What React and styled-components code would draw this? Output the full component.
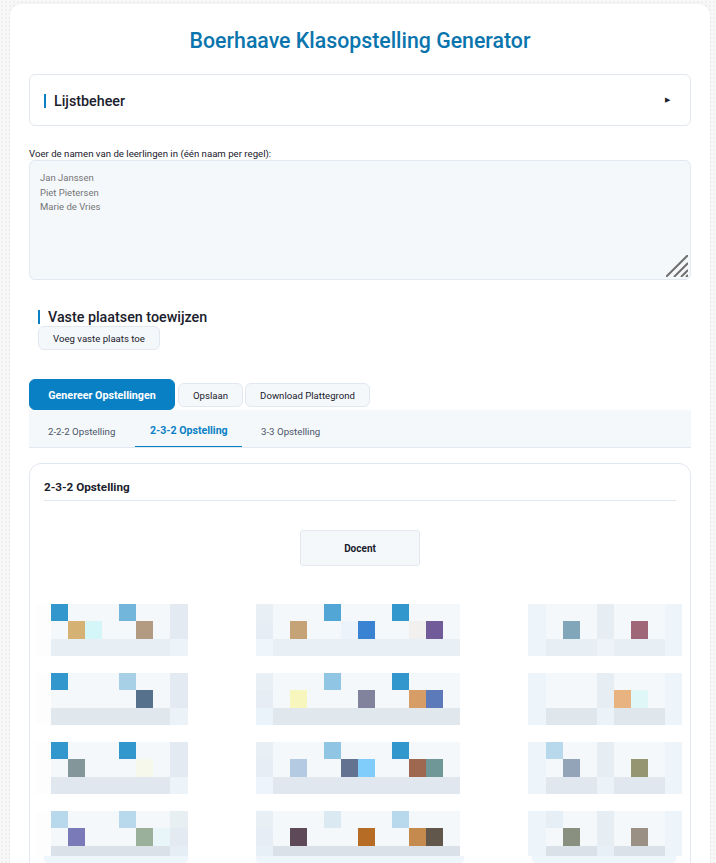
import React from 'react';
import styled, { createGlobalStyle } from 'styled-components';

const Global = createGlobalStyle`
  html, body {
    margin: 0;
    height: 863px;
    overflow: hidden;
  }
  body {
    background-color: #f8f8f8;
    background-image: radial-gradient(#f0f0f0 1px, transparent 1px);
    background-size: 4px 4px;
    font-family: Roboto, "Noto Sans", sans-serif;
    color: #1a202c;
  }
`

const Container = styled.div`
  box-sizing: border-box;
  width: 700px;
  margin: 4px 0 0 10px;
  padding: 20px 19px;
  height: 900px;
  background: #fff;
  border-radius: 12px;
  box-shadow: 0 0 4px rgba(0, 0, 0, 0.04);
`

const Title = styled.h1`
  margin: 0;
  height: 50px;
  line-height: 33px;
  text-align: center;
  font-size: 21.3px;
  font-weight: 500;
  color: #0a75ad;
`

const Panel = styled.div`
  box-sizing: border-box;
  height: 52px;
  padding: 0 20px 0 14px;
  display: flex;
  align-items: center;
  justify-content: space-between;
  border: 1px solid #e2e8f0;
  border-radius: 6px;
`

const SectionTitle = styled.h3`
  margin: 0;
  padding-left: 8px;
  border-left: 2px solid #0a80c4;
  font-size: 14.3px;
  line-height: 14px;
  font-weight: 500;
  position: relative;
  top: 1px;
`

const Arrow = styled.span`
  font-size: 7px;
  line-height: 8px;
  margin-bottom: 1px;
  color: #1a202c;
`

const Label = styled.label`
  display: block;
  margin-top: 21px;
  height: 13px;
  font-size: 9.65px;
  line-height: 13px;
`

const AreaWrap = styled.div`
  position: relative;
  height: 120px;
`

const Area = styled.textarea`
  box-sizing: border-box;
  display: block;
  width: 100%;
  height: 100%;
  padding: 10px;
  resize: none;
  background: #f4f8fb;
  border: 1px solid #e2e8f0;
  border-radius: 6px;
  font-family: inherit;
  font-size: 9.5px;
  line-height: 14.5px;
  &::placeholder {
    color: #757575;
  }
`

const Grip = styled.svg`
  position: absolute;
  right: 3px;
  bottom: 3px;
`

const Fixed = styled.section`
  margin: 29px 0 0 9px;
`

const Button = styled.button`
  box-sizing: border-box;
  width: ${p => p.$w}px;
  height: 24px;
  padding: 1px 0 0;
  background: #f4f8fb;
  border: 1px solid #e2e8f0;
  border-radius: 6px;
  font-family: inherit;
  font-size: 9.6px;
  font-weight: 400;
  color: #1a202c;
`

const AddButton = styled(Button)`
  display: block;
  margin-top: 3px;
`

const Actions = styled.div`
  margin-top: 29px;
  display: flex;
  align-items: center;
  gap: 2px;
`

const Primary = styled(Button)`
  height: 31px;
  margin-right: 1px;
  background: #0a80c4;
  border-color: #0a80c4;
  color: #fff;
  font-size: 10.7px;
  font-weight: 700;
`

const Tabs = styled.div`
  box-sizing: border-box;
  height: 38px;
  display: flex;
  background: #f4f8fb;
  border-bottom: 1px solid #e2e8f0;
`

const Tab = styled.div`
  box-sizing: border-box;
  width: ${p => p.$w}px;
  height: 37px;
  padding: ${p => (p.$active ? '5px 0 0 15px' : '5px 0 0 19px')};
  display: flex;
  align-items: center;
  font-size: ${p => (p.$active ? '10.6px' : '9.7px')};
  font-weight: ${p => (p.$active ? 700 : 400)};
  color: ${p => (p.$active ? '#0a80c4' : '#4a5568')};
  border-bottom: ${p => (p.$active ? '1px solid #0a80c4' : 'none')};
`

const Card = styled.div`
  box-sizing: border-box;
  margin-top: 15px;
  height: 500px;
  padding: 14px 14px 0;
  border: 1px solid #e2e8f0;
  border-radius: 12px;
`

const CardTitle = styled.h4`
  margin: 0;
  height: 22px;
  line-height: 19px;
  font-size: 11.7px;
  font-weight: 700;
  border-bottom: 1px solid #e2e8f0;
`

const Teacher = styled.div`
  box-sizing: border-box;
  width: 120px;
  height: 36px;
  margin: 29px auto 38px;
  display: flex;
  align-items: center;
  justify-content: center;
  background: #f4f8fb;
  border: 1px solid #e2e8f0;
  border-radius: 3px;
  font-size: 10px;
  font-weight: 700;
`

const Room = styled.div`
  margin: 0 -6px 0 -8px;
  display: flex;
  justify-content: space-between;
`

const Bank = styled.div`
  display: flex;
  flex-direction: column;
  gap: 17px;
`

const Rows = styled.div`
  display: grid;
  grid-template-columns: ${p => p.$cols};
  grid-template-rows: ${p => (p.$short ? '17px 18px 10px' : '17px 18px 17px')};
`

const Seat = styled.div`
  background: ${p => p.$color};
`

const Tray = styled.div`
  height: 7px;
  margin: -17px ${p => p.$right}px 0 ${p => p.$left}px;
  background: #eef5fb;
  border-radius: 0 0 5px 5px;
  box-shadow: 0 1px 2px rgba(0, 0, 0, 0.05);
`

// blank desk colour, the rows only list what differs from it
const B = '#f4f8fb'

const make = (width, top, mid, bottom) => {
  const fill = row => Array.from({ length: width }, (_, i) => row[i] || row.rest || B)
  return [...fill(top), ...fill(mid), ...fill(bottom)]
}

const side = (edge, strip, low, lowEdge, top = {}, mid = {}) =>
  make(
    9,
    { 0: '#fdfdfd', 8: edge, ...top },
    { 0: '#fdfdfd', 8: strip, ...mid },
    { 0: '#fdfdfd', rest: low, 8: lowEdge }
  )

const middle = (low, lowEdge, top = {}, mid = {}) =>
  make(
    12,
    { 0: '#e8eff5', ...top },
    { 0: '#e6edf4', ...mid },
    { rest: low, 0: lowEdge }
  )

const right = (low, lowMid, top = {}, mid = {}) =>
  make(
    9,
    { 0: '#edf5fa', 4: '#e6eef4', 8: '#edf5fa', ...top },
    { 0: '#edf5fa', 4: '#e6eef4', 8: '#edf5fa', ...mid },
    { rest: low, 0: '#edf5fa', 4: lowMid, 8: '#edf5fa' }
  )

const banks = [
  {
    cols: '15px repeat(7, 17px) 18px',
    tray: [8, 0],
    rows: [
      side('#e3eaf1', '#e3eaf1', '#e7eef4', '#edf4f9', { 1: '#3297cc', 5: '#72b6dc' }, { 2: '#d5b273', 3: '#d5f6f9', 6: '#b29b80' }),
      side('#e3eaf1', '#e3eaf1', '#e0e7ed', '#ebf3f9', { 1: '#3297cc', 5: '#a7d0e6' }, { 6: '#56718b' }),
      side('#e3eaf1', '#e3eaf1', '#e0e7ee', '#ecf3f9', { 1: '#3297cc', 5: '#3297cc' }, { 2: '#83979b', 6: '#f6f8ec' }),
      side('#e7eff3', '#e3eaf1', '#dae1e8', '#e6eef5', { 1: '#b8d8eb', 5: '#b8d8eb' }, { 2: '#7a7ab8', 6: '#9bb09a', 7: '#e8f6fa' }),
    ],
  },
  {
    cols: 'repeat(12, 17px)',
    tray: [0, -4],
    rows: [
      middle('#e8eff5', '#eef5fb', { 4: '#51a6d5', 8: '#3297cc' }, { 2: '#c6a277', 5: '#ecf3fa', 6: '#3a82d2', 9: '#f2f0ee', 10: '#715b99' }),
      middle('#e0e7ed', '#ebf3fa', { 4: '#90c5e3', 8: '#3297cc' }, { 2: '#f7f7bd', 6: '#81829c', 9: '#d79d66', 10: '#5c7aba' }),
      middle('#e0e7ee', '#edf4fb', { 4: '#90c5e3', 8: '#3297cc' }, { 2: '#b4cae2', 5: '#647291', 6: '#80cdfc', 9: '#9e6850', 10: '#6f9797' }),
      middle('#dae1e8', '#e8f0f7', { 4: '#dbe9f3', 8: '#b8d8eb' }, { 2: '#5e4958', 6: '#b76c26', 9: '#c58a4d', 10: '#62574b' }),
    ],
  },
  {
    cols: '18px repeat(8, 17px)',
    tray: [4, 6],
    rows: [
      right('#e7eff4', '#edf3f9', {}, { 2: '#81a5b9', 6: '#9f6678' }),
      right('#e0e7ec', '#ebf3f9', {}, { 5: '#e8b380', 6: '#e0f7f8' }),
      right('#e0e7ee', '#ebf3f9', { 1: '#b8d8eb' }, { 2: '#93a4b9', 6: '#969571' }),
      right('#dae1e8', '#e8f0f7', { 1: '#e6eff6' }, { 2: '#8a9080', 6: '#9a9084' }),
    ],
  },
]

const App = () => (
  <>
    <Global />
    <Container>
      <Title>Boerhaave Klasopstelling Generator</Title>
      <Panel>
        <SectionTitle>Lijstbeheer</SectionTitle>
        <Arrow>▶</Arrow>
      </Panel>
      <Label htmlFor="names">Voer de namen van de leerlingen in (één naam per regel):</Label>
      <AreaWrap>
        <Area id="names" placeholder={'Jan Janssen\nPiet Pietersen\nMarie de Vries'} />
        <Grip width="22" height="22" viewBox="0 0 22 22">
          <path d="M0 22 22 0M8 22 22 8M15 22 22 15M20 22 22 20" stroke="#6f6f6f" strokeWidth="2" fill="none" />
        </Grip>
      </AreaWrap>
      <Fixed>
        <SectionTitle>Vaste plaatsen toewijzen</SectionTitle>
        <AddButton $w={122}>Voeg vaste plaats toe</AddButton>
      </Fixed>
      <Actions>
        <Primary $w={146}>Genereer Opstellingen</Primary>
        <Button $w={65}>Opslaan</Button>
        <Button $w={125}>Download Plattegrond</Button>
      </Actions>
      <Tabs>
        <Tab $w={106}>2-2-2 Opstelling</Tab>
        <Tab $w={107} $active>2-3-2 Opstelling</Tab>
        <Tab $w={100}>3-3 Opstelling</Tab>
      </Tabs>
      <Card>
        <CardTitle>2-3-2 Opstelling</CardTitle>
        <Teacher>Docent</Teacher>
        <Room>
          {banks.map((bank, b) => (
            <Bank key={b}>
              {bank.rows.map((row, r) => (
                <Rows key={r} $cols={bank.cols} $short={r === 3}>
                  {row.map((color, i) => (
                    <Seat key={i} $color={color} />
                  ))}
                </Rows>
              ))}
              <Tray $left={bank.tray[0]} $right={bank.tray[1]} />
            </Bank>
          ))}
        </Room>
      </Card>
    </Container>
  </>
);

export default App;
